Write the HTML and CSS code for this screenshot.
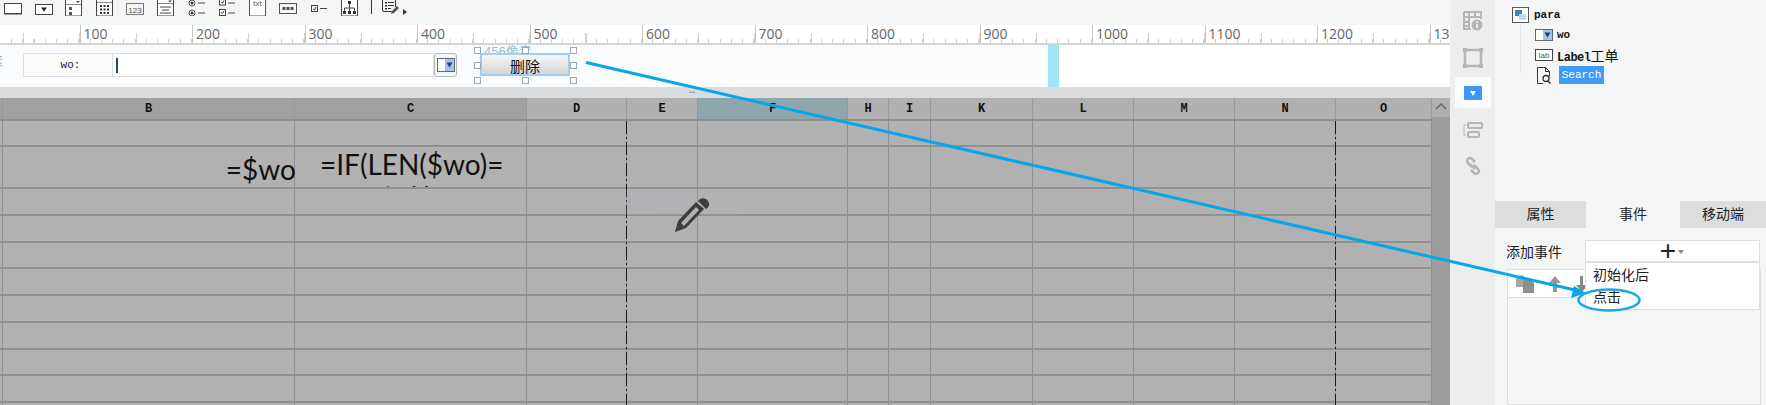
FILE: index.html
```html
<!DOCTYPE html>
<html>
<head>
    <meta charset="UTF-8">
    <title>para</title>
    <link rel="stylesheet" href="styles.css">
</head>
<body>
    <div class="main">
        <div class="toolbar">
            <svg class="tb" viewBox="0 0 18 16"><rect x="0.5" y="3.5" width="17" height="10" fill="#fff" stroke="#444"/><path d="M0 14.5h18" stroke="#999"/></svg>
            <svg class="tb" viewBox="0 0 18 16"><rect x="0.5" y="4.5" width="17" height="10" fill="#fff" stroke="#444"/><path d="M6 7.5h6l-3 4z" fill="#222"/></svg>
            <svg class="tb" viewBox="0 0 18 16"><rect x="0.5" y="-2" width="16" height="18" fill="#fff" stroke="#444"/><path d="M1 4.5h15" stroke="#888"/><path d="M11 1h4l-2 2z" fill="#444"/><rect x="4" y="7" width="3" height="3" fill="#555"/><rect x="4" y="12" width="3" height="3" fill="#555"/></svg>
            <svg class="tb" viewBox="0 0 18 16"><rect x="0.5" y="-2" width="16" height="18" fill="#fff" stroke="#444"/><path d="M1 2.5h15" stroke="#888"/><path d="M4 5h2v2H4zM7.500 5h2v2h-2zM11 5h2v2h-2zM4 8.500h2v2H4zM7.500 8.500h2v2h-2zM11 8.500h2v2h-2zM4 12h2v2H4zM7.500 12h2v2h-2zM11 12h2v2h-2z" fill="#333"/></svg>
            <svg class="tb" viewBox="0 0 18 16"><rect x="0.5" y="3.500" width="17" height="11" fill="#f4f4f4" stroke="#777"/><text x="9" y="12.500" class="tb-num">123</text></svg>
            <svg class="tb" viewBox="0 0 18 16"><rect x="0.5" y="-2" width="16" height="18" fill="#fff" stroke="#444"/><path d="M1 3.500h15" stroke="#888"/><path d="M11 0.500h4l-2 2z" fill="#444"/><path d="M3 7h11M5 10h7M3 13h11" stroke="#444"/></svg>
            <svg class="tb" viewBox="0 0 18 16"><circle cx="4" cy="3" r="3" fill="#fff" stroke="#555"/><circle cx="4" cy="3" r="1.500" fill="#333"/><path d="M10 3h7" stroke="#444"/><circle cx="4" cy="13" r="3" fill="#fff" stroke="#555"/><circle cx="4" cy="13" r="1.500" fill="#333"/><path d="M10 13h7" stroke="#444"/></svg>
            <svg class="tb" viewBox="0 0 18 16"><rect x="1.500" y="-1" width="6" height="6" fill="#fff" stroke="#444"/><path d="M3 2l1.500 1L6 0.500" stroke="#333" fill="none"/><path d="M10 3h7" stroke="#444"/><rect x="1.500" y="9.500" width="6" height="6" fill="#fff" stroke="#444"/><path d="M3 12.500l1.500 1L6 11" stroke="#333" fill="none"/><path d="M10 13h7" stroke="#444"/></svg>
            <svg class="tb" viewBox="0 0 18 16"><rect x="0.500" y="-2" width="16" height="18" fill="#fff" stroke="#555"/><text x="8.500" y="6" class="tb-txt">txt</text></svg>
            <svg class="tb" viewBox="0 0 18 16"><rect x="0.500" y="3.500" width="17" height="10" fill="#f4f4f4" stroke="#555"/><path d="M3.500 7h3v3h-3zM7.500 7h3v3h-3zM11.500 7h3v3h-3z" fill="#555"/></svg>
            <svg class="tb" viewBox="0 0 18 16"><rect x="1.500" y="5.500" width="6" height="6" fill="#fff" stroke="#444"/><path d="M3 9l1.500 1L6 7" stroke="#333" fill="none"/><path d="M10 8.500h7" stroke="#444"/></svg>
            <svg class="tb" viewBox="0 0 18 16"><rect x="0.500" y="-2" width="16" height="18" fill="#fff" stroke="#444"/><rect x="7" y="1" width="3" height="3" fill="#333"/><path d="M8.500 4v4M3.500 11V8h10v3M8.500 8v3" stroke="#444" fill="none"/><path d="M2 11h3v3H2zM7 11h3v3H7zM12 11h3v3h-3z" fill="#333"/></svg>
            <div class="tb-sep"></div>
            <svg class="tb-more" viewBox="0 0 26 16"><path d="M0.500 0V10a1.500 1.500 0 0 0 1.500 1.500H10M13.500 0V7" fill="none" stroke="#333"/><path d="M3 2h2v1.500H3zM3 5h2v1.500H3zM3 8h2v1.500H3z" fill="#333"/><path d="M6 2.500h6M6 5.500h6M6 8.500h3" stroke="#333"/><path d="M9 14l1-3 5-5 2 2-5 5z" fill="#555"/><path d="M21 9l4 3-4 3z" fill="#333"/></svg>
        </div>

        <div class="ruler">
            <span>100</span><span>200</span><span>300</span><span>400</span><span>500</span><span>600</span><span>700</span><span>800</span><span>900</span><span>1000</span><span>1100</span><span>1200</span><span>1300</span>
        </div>

        <div class="strip">
            <div class="canvas">
                <span class="cut-text">素</span>
                <div class="field">
                    <div class="field-label">wo:</div>
                    <div class="field-input"><i class="caret"></i></div>
                    <div class="field-btn">
                        <svg viewBox="0 0 18 14" width="18" height="14"><rect x="0.500" y="0.500" width="17" height="13" fill="#fff" stroke="#667"/><rect x="8" y="1" width="9" height="12" fill="#a9c3e6"/><path d="M9.500 4.500h6l-3 5z" fill="#1c3f7a"/></svg>
                    </div>
                </div>
                <div class="selected">
                    <span class="size-tip">456像素</span>
                    <button class="del-btn">删除</button>
                    <i class="hd tl"></i><i class="hd tc"></i><i class="hd tr"></i>
                    <i class="hd ml"></i><i class="hd mr"></i>
                    <i class="hd bl"></i><i class="hd bc"></i><i class="hd br"></i>
                </div>
            </div>
            <div class="page-mark"></div>
            <div class="blank"></div>
        </div>

        <div class="splitter"><span>•••</span></div>

        <div class="sheet">
            <div class="cols">
                <div class="col w-a"><div class="head sel"></div><div class="body"></div></div>
                <div class="col w-b"><div class="head sel">B</div><div class="body">
                    <div class="cell-tall right">=$wo</div>
                </div></div>
                <div class="col w-c"><div class="head sel">C</div><div class="body">
                    <div class="cell-tall">=IF(LEN($wo)=<br>0,"工程单号码",""</div>
                </div></div>
                <div class="col w-d"><div class="head">D</div><div class="body dash"></div></div>
                <div class="col w-e"><div class="head">E</div><div class="body"></div></div>
                <div class="col w-f"><div class="head act">F</div><div class="body"></div></div>
                <div class="col w-h"><div class="head">H</div><div class="body"></div></div>
                <div class="col w-i"><div class="head">I</div><div class="body"></div></div>
                <div class="col w-k"><div class="head">K</div><div class="body"></div></div>
                <div class="col w-l"><div class="head">L</div><div class="body"></div></div>
                <div class="col w-m"><div class="head">M</div><div class="body"></div></div>
                <div class="col w-n"><div class="head">N</div><div class="body dash"></div></div>
                <div class="col w-o"><div class="head">O</div><div class="body"></div></div>
            </div>
            <div class="scrollbar">
                <div class="scroll-up"><svg viewBox="0 0 12 8" width="12" height="8"><path d="M1 7l5-5 5 5" fill="none" stroke="#666" stroke-width="1.500"/></svg></div>
            </div>
        </div>
    </div>

    <div class="side">
        <svg class="side-ico" viewBox="0 0 20 20" width="20" height="20"><path d="M1 1h17v7M1 1v17h7M1 6h17M6 1v17M12 1v5M1 11h5M1 15h5" fill="none" stroke="#b4b6b6" stroke-width="2"/><circle cx="14" cy="14" r="5.500" fill="#b4b6b6"/><path d="M14 10.500v1.500M14 13v4" stroke="#eceeee" stroke-width="1.800"/></svg>
        <svg class="side-ico" viewBox="0 0 20 20" width="20" height="20"><rect x="2" y="2" width="16" height="16" fill="none" stroke="#b4b6b6" stroke-width="2.500"/><path d="M0 0h4v4H0zM16 0h4v4h-4zM0 16h4v4H0zM16 16h4v4h-4z" fill="#b4b6b6"/></svg>
        <div class="side-on"><svg viewBox="0 0 18 14" width="18" height="14"><rect width="18" height="14" rx="1" fill="#3e97f8"/><path d="M6 5h6l-3 5z" fill="#fff"/></svg></div>
        <svg class="side-ico" viewBox="0 0 20 16" width="20" height="16"><path d="M3 3H1v10h2" fill="none" stroke="#b4b6b6"/><rect x="5" y="1" width="14" height="5" rx="1" fill="none" stroke="#b4b6b6" stroke-width="2"/><rect x="5" y="10" width="11" height="5" rx="1" fill="none" stroke="#b4b6b6" stroke-width="2"/></svg>
        <svg class="side-ico" viewBox="0 0 20 20" width="20" height="20"><g fill="none" stroke="#b4b6b6" stroke-width="2.500"><path d="M9 11L5 7a2.800 2.800 0 0 1 4-4l3 3"/><path d="M8 9l4 4M11 9l4 4a2.800 2.800 0 0 1-4 4l-3-3"/></g></svg>
    </div>

    <div class="panel">
        <div class="tree">
            <div class="node root">
                <svg viewBox="0 0 17 16" width="17" height="16"><rect x="0.500" y="0.500" width="16" height="15" fill="#fff" stroke="#555"/><rect x="3" y="3" width="7" height="6" fill="#3a85c0"/><rect x="7" y="7" width="7" height="6" fill="#bcd6f2"/></svg>
                <span>para</span>
            </div>
            <div class="kids">
                <div class="node">
                    <svg viewBox="0 0 18 12" width="18" height="12"><rect x="0.500" y="0.500" width="17" height="11" fill="#fff" stroke="#667"/><rect x="8" y="1" width="9" height="10" fill="#a9c3e6"/><path d="M9.500 3.500h6l-3 5z" fill="#1c3f7a"/></svg>
                    <span>wo</span>
                </div>
                <div class="node">
                    <svg viewBox="0 0 18 12" width="18" height="12"><rect x="0.500" y="0.500" width="17" height="11" fill="#fff" stroke="#444"/><text x="9" y="9" class="lab">lab</text></svg>
                    <span class="label-name">Label<em class="cn">工单</em></span>
                </div>
                <div class="node">
                    <svg class="doc" viewBox="0 0 14 17" width="14" height="17"><path d="M0.500 0.500h8l4 4v5M6 16.500H0.500V0.500M8.500 0.500v4h4" fill="none" stroke="#333"/><circle cx="9" cy="11.500" r="3" fill="#fff" stroke="#333" stroke-width="1.300"/><path d="M11 14l2.500 2.500" stroke="#333" stroke-width="1.500"/></svg>
                    <span class="hit">Search</span>
                </div>
            </div>
        </div>

        <div class="tabs">
            <div class="tab">属性</div>
            <div class="tab on">事件</div>
            <div class="tab">移动端</div>
        </div>

        <div class="event-row">
            <label>添加事件</label>
            <div class="add-box">
                <span class="plus">+</span><i class="add-caret"></i>
                <div class="add-menu">
                    <div>初始化后</div>
                    <div>点击</div>
                </div>
            </div>
        </div>

        <div class="actions">
            <div class="act-bar">
                <svg viewBox="0 0 18 18" width="18" height="18"><path d="M0 2l6-2 4 3v9H0z" fill="#a8a8a8"/><path d="M7 5h8l3 3v10H7z" fill="#8f8f8f"/></svg>
                <svg viewBox="0 0 12 16" width="12" height="16"><path d="M6 0l6 7H8v9H4V7H0z" fill="#999"/></svg>
                <svg viewBox="0 0 12 16" width="12" height="16"><path d="M4 0h3v9h5l-6 7-6-7h4z" fill="#888"/></svg>
            </div>
        </div>
    </div>

    <div class="smudge"></div>
    <div class="watermark">
        <span class="wm-a">N044</span><span class="wm-b">09:17:28</span><span class="wm-c">guoq</span>
        <span class="wm-d">2023-11-19</span><span class="wm-e">AF-N044</span><span class="wm-f">09:17:28</span><span class="wm-g">guoq</span>
    </div>

    <svg class="pencil" viewBox="0 0 35 34" width="35" height="34"><path d="M0 34l3-11L21 4l8 7-18 19z" fill="#3c3c3c"/><path d="M6 25L21 9l3 3L9 28z" fill="#b0b0b0"/><path d="M23 3c3-4 8-3 10 0s1 6-2 8z" fill="#3c3c3c"/></svg>

    <svg class="overlay" viewBox="0 0 1766 405" width="1766" height="405">
        <path d="M586 62.500L1575 290" stroke="#06a6ea" stroke-width="3" fill="none"/>
        <path d="M1586 293l-15 5 3-12z" fill="#06a6ea"/>
        <ellipse cx="1609" cy="300" rx="30.500" ry="10.500" fill="none" stroke="#1da7e6" stroke-width="2.500"/>
    </svg>
</body>
</html>
```

FILE: styles.css
```css
html, body {
    margin: 0;
    height: 405px;
    overflow: hidden;
}

body {
    position: relative;
    display: flex;
    width: 1766px;
    background: #f4f6f5;
    font-family: "Liberation Sans", "Noto Sans CJK SC", sans-serif;
    color: #222;
}

.main {
    width: 1450px;
    flex: none;
    display: flex;
    flex-direction: column;
    overflow: hidden;
}

/* toolbar */
.toolbar {
    height: 25px;
    box-sizing: border-box;
    padding-left: 4px;
    display: flex;
    gap: 12.600px;
    background: #f4f6f5;
}

.tb {
    width: 18px;
    height: 16px;
    flex: none;
}

.tb-num,
.tb-txt,
.lab {
    font: 8px "Liberation Sans", sans-serif;
    fill: #555;
    text-anchor: middle;
}

.tb-sep {
    width: 1px;
    height: 14px;
    background: #333;
    margin-right: -3px;
}

.tb-more {
    width: 26px;
    height: 16px;
}

/* ruler */
.ruler {
    height: 20px;
    box-sizing: border-box;
    padding-left: 79.500px;
    display: flex;
    border-bottom: 2px solid #d4d6d6;
    background-color: #fff;
    background-image:
        repeating-linear-gradient(to right, #d0d2d2 0, #d0d2d2 1px, transparent 1px, transparent 11.250px),
        repeating-linear-gradient(to right, #d0d2d2 0, #d0d2d2 1px, transparent 1px, transparent 56.250px);
    background-size: 100% 4px, 100% 10px;
    background-position: 11.250px bottom, 23.250px bottom;
    background-repeat: no-repeat;
}

.ruler span {
    flex: 0 0 112.500px;
    box-sizing: border-box;
    padding-left: 3px;
    border-left: 1px solid #c4c6c6;
    font: 14px/17px "Open Sans", sans-serif;
    color: #666;
}

/* form strip */
.strip {
    height: 42px;
    display: flex;
    background: #f9fbfc;
}

.canvas {
    position: relative;
    width: 1048px;
    flex: none;
}

.cut-text {
    position: absolute;
    left: -9px;
    top: 7px;
    font-size: 12px;
    color: #8fb3cf;
}

.page-mark {
    width: 11px;
    flex: none;
    background: #9fe4f2;
}

.blank {
    flex: 1;
    background: #fff;
}

.field {
    position: absolute;
    left: 23px;
    top: 8px;
    display: flex;
    height: 24px;
}

.field-label {
    width: 90px;
    box-sizing: border-box;
    border: 1px solid #dcdedf;
    background: #fbfcfc;
    font: 11px/22px "Liberation Mono", monospace;
    text-align: center;
    padding-left: 5px;
}

.field-input {
    width: 321px;
    box-sizing: border-box;
    border: 1px solid #dcdedf;
    border-left: none;
    background: #fff;
    padding: 4px 3px;
}

.caret {
    display: block;
    width: 2px;
    height: 15px;
    background: #1b4a70;
}

.field-btn {
    width: 23px;
    box-sizing: border-box;
    border: 1px solid #b5b7b8;
    border-radius: 3px;
    background: #f4f5f5;
    padding: 4px 2px;
    line-height: 0;
}

.selected {
    position: absolute;
    left: 480px;
    top: 8px;
    width: 90px;
    height: 23px;
}

.size-tip {
    position: absolute;
    left: 4px;
    top: -9px;
    font-size: 13px;
    line-height: 15px;
    color: #9fbcd3;
    white-space: nowrap;
}

.del-btn {
    position: relative;
    display: block;
    width: 100%;
    height: 100%;
    padding: 0;
    box-sizing: border-box;
    border: 2px solid #a3cdef;
    background: linear-gradient(#f6f6f6, #d6d6d6);
    font: 15px "Noto Sans CJK SC", sans-serif;
    color: #111;
}

.hd {
    position: absolute;
    width: 5px;
    height: 5px;
    border: 1px solid #9aabb8;
    background: #fff;
}

.tl, .tc, .tr { top: -6px; }
.ml, .mr { top: 9px; }
.bl, .bc, .br { top: 24px; }
.tl, .ml, .bl { left: -6px; }
.tc, .bc { left: 42px; }
.tr, .mr, .br { left: 90px; }

.splitter {
    height: 11px;
    background: #dadcdd;
    text-align: center;
    font-size: 6px;
    line-height: 10px;
    color: #888;
    padding-right: 66px;
    box-sizing: border-box;
}

/* sheet */
.sheet {
    flex: 1;
    display: flex;
    background: #b1b1b1;
    min-height: 0;
}

.cols {
    width: 1432px;
    display: flex;
}

.col {
    flex: none;
    display: flex;
    flex-direction: column;
    box-sizing: border-box;
}

.w-a { width: 3px; }
.w-b { width: 292px; }
.w-c { width: 232px; }
.w-d { width: 100px; }
.w-e { width: 71px; }
.w-f { width: 150px; }
.w-h { width: 41px; }
.w-i { width: 42px; }
.w-k { width: 102px; }
.w-l { width: 101px; }
.w-m { width: 101px; }
.w-n { width: 101px; }
.w-o { width: 96px; }

.head {
    height: 21px;
    box-sizing: border-box;
    border-right: 1px solid #999;
    background: #b0b0b0;
    font: bold 12px/22px "Liberation Mono", monospace;
    color: #111;
    text-align: center;
    overflow: hidden;
}

.head.sel {
    background: #a0a2a1;
}

.head.act {
    background: #8fa6ac;
}

.body {
    position: relative;
    flex: 1;
    box-sizing: border-box;
    border-right: 1px solid #909090;
    background-color: #b1b1b1;
    background-image:
        linear-gradient(#909090, #909090),
        linear-gradient(#909090, #909090),
        linear-gradient(#909090, #909090),
        repeating-linear-gradient(transparent 0, transparent 24.750px, #909090 24.750px, #909090 26.750px);
    background-size: 100% 2px, 100% 2px, 100% 2px, 100% 100%;
    background-position: 0 0, 0 26px, 0 68px, 0 70px;
    background-repeat: no-repeat;
}

.body.dash::after {
    content: "";
    position: absolute;
    right: -1px;
    top: 2px;
    bottom: 0;
    width: 1.500px;
    background: repeating-linear-gradient(#1a1a1a 0, #1a1a1a 13px, transparent 13px, transparent 16px, #1a1a1a 16px, #1a1a1a 18px, transparent 18px, transparent 21px);
}

.cell-tall {
    height: 68px;
    padding: 28px 0 0 25px;
    box-sizing: border-box;
    overflow: hidden;
    font: 28px/35px Lato, "Noto Sans CJK SC", sans-serif;
    color: #111;
    white-space: nowrap;
}

.cell-tall.right {
    text-align: right;
    padding: 33px 0 0;
    margin-right: -2px;
}

.scrollbar {
    flex: 1;
    background: #9d9d9d;
}

.scroll-up {
    height: 19px;
    background: #b0b0b0;
    text-align: center;
    padding-top: 4px;
    box-sizing: border-box;
    line-height: 0;
}

/* side strip */
.side {
    width: 45px;
    flex: none;
    box-sizing: border-box;
    padding-top: 11px;
    display: flex;
    flex-direction: column;
    align-items: center;
    background: #eceeee;
}

.side-ico:nth-child(1) {
    margin-bottom: 17px;
}

.side-ico:nth-child(2) {
    margin-bottom: 9px;
}

.side-ico:nth-child(4) {
    margin-bottom: 18px;
}

.side-on {
    width: 36px;
    height: 31px;
    margin-bottom: 14px;
    background: #fafbfb;
    display: flex;
    align-items: center;
    justify-content: center;
}

/* right panel */
.panel {
    flex: 1;
    display: flex;
    flex-direction: column;
}

.tree {
    height: 201px;
    box-sizing: border-box;
    padding: 7px 0 0 17px;
    font: bold 11px "Liberation Mono", "Noto Sans CJK SC", monospace;
    color: #111;
}

.node {
    display: flex;
    align-items: center;
    gap: 4px;
    height: 20px;
}

.node svg {
    flex: none;
}

.node.root {
    height: 16px;
    gap: 5px;
}

.kids {
    margin: 2px 0 0 6px;
    padding-left: 17px;
    width: max-content;
    background: linear-gradient(#e2e4e4, #e2e4e4) 2px 0 / 1px 48px no-repeat;
}

.node span {
    font-size: 11px;
}

.node .label-name {
    font-size: 12px;
    letter-spacing: -0.500px;
}

.cn {
    font: normal 14px "Noto Sans CJK SC", sans-serif;
    letter-spacing: 0;
}

.doc {
    margin: 0 4px 0 2px;
}

.hit {
    background: #3f9bf5;
    color: #fff;
    padding: 3px 0;
    font-weight: normal;
    width: 45px;
    text-align: center;
}

.tabs {
    display: flex;
    height: 27px;
    font-size: 14px;
    line-height: 27px;
    text-align: center;
    background: #dcdddf;
}

.tab:nth-child(1) { width: 91px; }
.tab:nth-child(2) { width: 94px; }
.tab:nth-child(3) { flex: 1; }

.tab.on {
    background: #f4f6f5;
}

.event-row {
    display: flex;
    height: 22px;
    margin-top: 12px;
    padding-left: 11px;
    font-size: 14px;
    line-height: 24px;
    position: relative;
    z-index: 1;
}

.event-row label {
    width: 79px;
}

.add-box {
    position: relative;
    width: 175px;
    height: 22px;
    box-sizing: border-box;
    border: 1px solid #dcdedf;
    background: #fff;
    text-align: center;
    padding-right: 9px;
}

.plus {
    font: 28px/20px "Liberation Sans", sans-serif;
    color: #222;
}

.add-caret {
    position: absolute;
    left: 92px;
    top: 9px;
    border: 3px solid transparent;
    border-top: 4px solid #888;
    border-bottom: none;
}

.add-menu {
    position: absolute;
    left: -1px;
    top: 21px;
    width: 175px;
    height: 48px;
    box-sizing: border-box;
    border: 1px solid #dcdedf;
    background: #fff;
    padding: 1px 7px;
    text-align: left;
    font-size: 14px;
    line-height: 22px;
}

.actions {
    flex: 1;
    margin: 7px 5px 0 12px;
    border: 1px solid #dcdedf;
    background: #f4f6f5;
}

.act-bar {
    height: 28px;
    box-sizing: border-box;
    background: #fff;
    border-bottom: 1px solid #dcdedf;
    display: flex;
    align-items: center;
    padding-left: 8px;
    gap: 15px;
}

/* overlays */
.smudge {
    position: absolute;
    left: 625px;
    top: 190px;
    width: 140px;
    height: 25px;
    background: linear-gradient(to right, rgba(190, 175, 200, 0.2), rgba(190, 175, 200, 0.18) 48%, rgba(190, 190, 195, 0.06) 50%, rgba(190, 190, 195, 0));
}

.watermark {
    position: absolute;
    inset: 0;
    z-index: 2;
    pointer-events: none;
    font: 48px "Liberation Serif", serif;
    color: rgba(0, 0, 0, 0.012);
    white-space: nowrap;
}

.watermark span {
    position: absolute;
    top: 209px;
}

.wm-a { left: 38px; }
.wm-b { left: 205px; letter-spacing: 5px; }
.wm-c { left: 490px; }
.wm-d { left: 755px; }
.wm-e { left: 1080px; }
.wm-f { left: 1346px; letter-spacing: 5px; }
.wm-g { left: 1620px; }

.pencil {
    position: absolute;
    left: 675px;
    top: 198px;
    z-index: 2;
}

.overlay {
    position: absolute;
    left: 0;
    top: 0;
    z-index: 3;
    pointer-events: none;
}
```
